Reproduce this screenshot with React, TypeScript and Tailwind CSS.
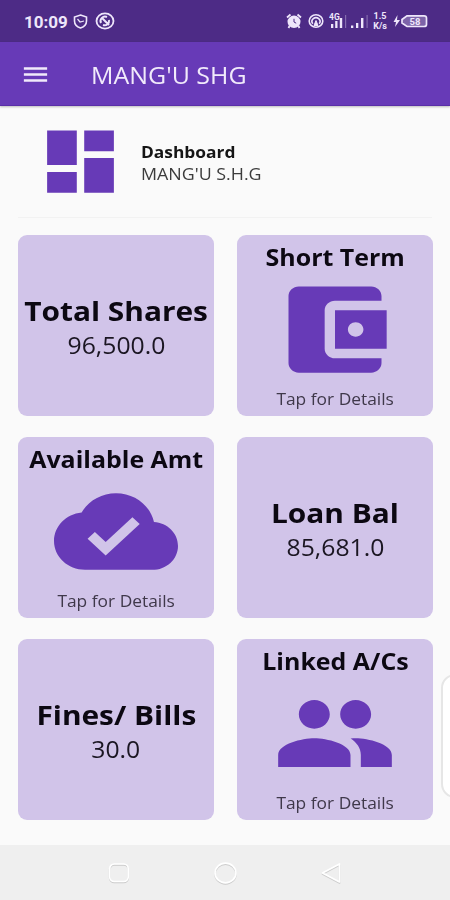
import type { ReactNode } from "react";

type Card = {
  title: string;
  value?: string;
  icon?: string;
};

const cards: Card[] = [
  { title: "Total Shares", value: "96,500.0" },
  {
    title: "Short Term",
    icon: "M21 18v1c0 1.1-.9 2-2 2H5c-1.11 0-2-.9-2-2V5c0-1.1.89-2 2-2h14c1.1 0 2 .9 2 2v1h-9c-1.11 0-2 .9-2 2v8c0 1.1.89 2 2 2h9zm-9-2h10V8H12v8zm4-2.500c-.83 0-1.500-.67-1.500-1.500s.67-1.500 1.500-1.500 1.500.67 1.500 1.500-.67 1.500-1.500 1.500z",
  },
  {
    title: "Available Amt",
    icon: "M19.350 10.040C18.670 6.590 15.640 4 12 4 9.110 4 6.600 5.640 5.350 8.040 2.340 8.360 0 10.910 0 14c0 3.310 2.690 6 6 6h13c2.760 0 5-2.240 5-5 0-2.640-2.050-4.780-4.650-4.960zM10 17l-3.500-3.500 1.410-1.410L10 14.170 15.180 9l1.410 1.410L10 17z",
  },
  { title: "Loan Bal", value: "85,681.0" },
  { title: "Fines/ Bills", value: "30.0" },
  {
    title: "Linked A/Cs",
    icon: "M16 11c1.660 0 2.990-1.340 2.990-3S17.660 5 16 5c-1.660 0-3 1.340-3 3s1.340 3 3 3zm-8 0c1.660 0 2.990-1.340 2.990-3S9.660 5 8 5C6.340 5 5 6.340 5 8s1.340 3 3 3zm0 2c-2.330 0-7 1.170-7 3.500V19h14v-2.500c0-2.330-4.670-3.500-7-3.500zm8 0c-.29 0-.62.02-.97.05 1.160.84 1.970 1.970 1.970 3.450V19h6v-2.500c0-2.330-4.670-3.500-7-3.500z",
  },
];

function Text({ className, children }: { className: string; children: ReactNode }) {
  return <span className={`block whitespace-nowrap ${className}`}>{children}</span>;
}

function StatusBar() {
  return (
    <div className="flex h-[42px] items-center bg-[#4d2b86] pl-[24px] pr-[22px] text-[#eee6fb]">
      <Text className="w-[43px] pt-[2px] font-[Roboto] text-[17px] font-bold leading-none">10:09</Text>
      <svg className="ml-[6px] h-[15px] w-[15px]" viewBox="0 0 15 15" fill="none" stroke="currentColor" strokeWidth="1.6">
        <path d="M7.500 1 L13.500 3 V7 C13.500 10.500 10.500 13 7.500 14 C4.500 13 1.500 10.500 1.500 7 V3 Z" />
        <path d="M4.500 5 L7 8 L11 7" strokeWidth="1.2" />
      </svg>
      <svg className="ml-[7px] h-[18px] w-[20px]" viewBox="0 0 20 18" fill="none" stroke="currentColor" strokeWidth="1.8">
        <ellipse cx="10" cy="9" rx="8.500" ry="7.700" />
        <path d="M6 11 A4.500 4.500 0 0 1 12 5 M8 13 A4.500 4.500 0 0 0 14 8 M7 6 L14 13" strokeWidth="2" />
      </svg>
      <div className="ml-auto flex items-center">
        <svg className="h-[16px] w-[16px]" viewBox="0 0 16 16">
          <ellipse cx="8" cy="8.800" rx="6.500" ry="6.200" fill="currentColor" />
          <path d="M1 4.500 L4.500 1.500 M15 4.500 L11.500 1.500 M3.500 13 L2.500 15 M12.500 13 L13.500 15" stroke="currentColor" strokeWidth="1.800" />
          <path d="M8 5.800 V9 L10.200 10.200" stroke="#4d2b86" strokeWidth="1" fill="none" />
        </svg>
        <svg className="ml-[6px] h-[16px] w-[16px]" viewBox="0 0 16 16" fill="none" stroke="currentColor" strokeWidth="1.600">
          <ellipse cx="8" cy="8" rx="6.800" ry="6.300" />
          <path d="M4.800 10.800 A4 3.800 0 1 1 11.200 10.800" />
          <path d="M8 7.500 L10 12.500 H6 Z" fill="currentColor" strokeWidth="1" />
        </svg>
        <svg className="ml-[5px] h-[18px] w-[18px]" viewBox="0 0 18 18" fill="currentColor">
          <text x="0" y="7.500" fontSize="8.500" fontWeight="700" fontFamily="Roboto, sans-serif">4G</text>
          <path d="M2 12h2.300v4h-2.300zM6.200 9h2.300v7h-2.300zM10.800 6h2.400v10h-2.400z" />
          <path d="M16 3h1.200v13h-1.200z" opacity=".35" />
        </svg>
        <svg className="ml-[4px] h-[18px] w-[18px]" viewBox="0 0 18 18" fill="currentColor">
          <path d="M0 13.500h2.300v2.500h-2.300zM5 11h2.300v5h-2.300zM10 6h2.400v10h-2.400z" />
          <path d="M15.500 3h1.200v13h-1.200z" opacity=".35" />
        </svg>
        <div className="ml-[2px] flex w-[18px] flex-col items-center font-[Roboto] text-[9px] font-bold leading-[10.5px]">
          <span>1.5</span>
          <span>K/s</span>
        </div>
        <svg className="ml-[4px] h-[14px] w-[35px]" viewBox="0 0 35 14">
          <path d="M4.500 1 L0.500 8 H3 L2 13 L7 6 H4 Z" fill="currentColor" />
          <path d="M14 1.800 H31 Q33.500 1.800 33.500 4 V10.500 Q33.500 12.500 31 12.500 H14 L9 9 V5.500 Z" fill="currentColor" fillOpacity=".3" stroke="currentColor" strokeWidth="1.700" />
          <text x="16.500" y="10.700" fontSize="9.500" fontWeight="700" fontFamily="Roboto, sans-serif" fill="currentColor">58</text>
        </svg>
      </div>
    </div>
  );
}

function DashboardCard({ card }: { card: Card }) {
  if (card.icon) {
    return (
      <div className="flex h-[181px] flex-col items-center rounded-[9px] bg-[#d1c4e9] pt-[6px]">
        <Text className="h-[31px] scale-x-[1.085] text-[23px] font-bold leading-[32px] text-[#0c0812]">{card.title}</Text>
        <svg className="h-[115px] w-[124px] shrink-0" viewBox="0 0 24 24" preserveAspectRatio="none" fill="#673ab7">
          <path d={card.icon} />
        </svg>
        <Text className="scale-x-[1.085] text-[16px] leading-[24px] text-[#3f384a]">Tap for Details</Text>
      </div>
    );
  }
  return (
    <div className="flex h-[181px] flex-col items-center justify-center rounded-[9px] bg-[#d1c4e9] pt-[3px]">
      <Text className="scale-x-[1.105] text-[27px] font-bold leading-[36px] text-[#0c0812]">{card.title}</Text>
      <Text className="scale-x-[1.075] text-[23px] leading-[33px] text-[#1b1622]">{card.value}</Text>
    </div>
  );
}

export default function App() {
  return (
    <div className="relative flex h-[900px] w-[450px] flex-col overflow-hidden bg-[#fafafa] font-['Open_Sans','Noto_Sans',sans-serif]">
      <StatusBar />
      <header className="flex h-[64px] items-center border-b border-[#5a2fa8] bg-[#673ab7] pl-5 shadow-[0_1px_2px_rgba(0,0,0,0.25)]">
        <svg className="mt-[2px] h-[29px] w-[31px]" viewBox="0 0 24 24" preserveAspectRatio="none" fill="#f1eafb">
          <path d="M3 18h18v-2H3v2zm0-5h18v-2H3v2zm0-7v2h18V6H3z" />
        </svg>
        <Text className="ml-[40px] mt-[2px] origin-left scale-x-[1.085] text-[23px] leading-8 text-[#f1eafb]">MANG'U SHG</Text>
      </header>
      <main className="flex grow flex-col px-[18px]">
        <section className="flex h-[112px] items-start border-b border-[#f2f2f2] pl-[18px] pt-[14px]">
          <svg className="h-[83px] w-[89px]" viewBox="0 0 24 24" preserveAspectRatio="none" fill="#673ab7">
            <path d="M3 13h8V3H3v10zm0 8h8v-6H3v6zm10 0h8V11h-8v10zm0-18v6h8V3h-8z" />
          </svg>
          <div className="ml-[16px] pt-[21px] text-[16px] leading-[22px]">
            <Text className="origin-left scale-x-[1.085] font-bold text-[#151515]">Dashboard</Text>
            <Text className="origin-left scale-x-[1.115] text-[#3c3c3c]">MANG'U S.H.G</Text>
          </div>
        </section>
        <section className="mt-[17px] grid grid-cols-[196px_196px] gap-x-[23px] gap-y-[21px]">
          {cards.map((card) => (
            <DashboardCard key={card.title} card={card} />
          ))}
        </section>
      </main>
      <nav className="flex h-[55px] items-center bg-[#efefef] pl-[108px]">
        <svg className="h-[24px] w-[236px] drop-shadow-[0_1px_0.5px_rgba(0,0,0,0.15)]" viewBox="0 0 236 24" fill="none" stroke="#fff" strokeWidth="1.700" strokeLinejoin="round">
          <rect x="1.700" y="3" width="18.500" height="17.500" rx="4.500" />
          <ellipse cx="117.500" cy="12" rx="10.500" ry="9.800" />
          <path d="M231.500 3 V21 L214.500 12 Z" />
        </svg>
      </nav>
      <div className="absolute left-[441px] top-[674px] h-[124px] w-[30px] rounded-[14px] border-2 border-[#e6e6e6] bg-white" />
    </div>
  );
}
